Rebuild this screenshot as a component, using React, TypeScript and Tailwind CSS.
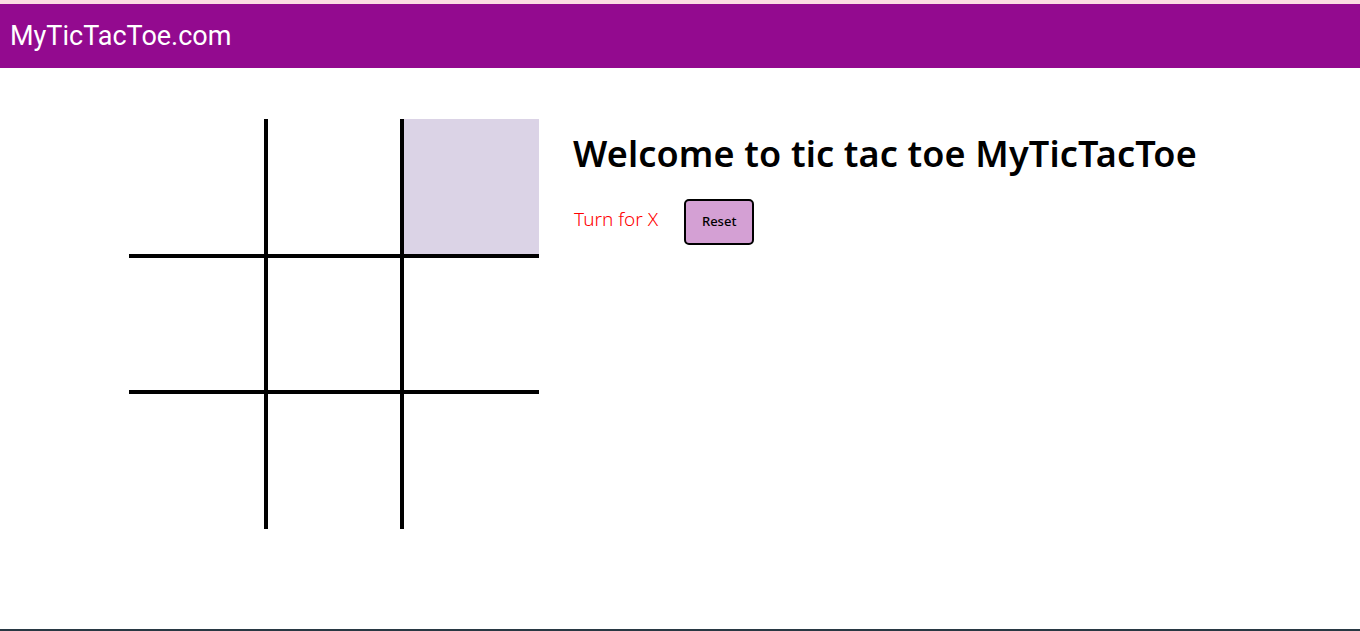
import React from "react";

export default function App() {
  const cells = [0, 1, 2, 3, 4, 5, 6, 7, 8];
  const widths = ["w-[135px]", "w-[132px]", "w-[135px]"];
  const heights = ["h-[135px]", "h-[132px]", "h-[135px]"];
  return (
    <div className="min-h-screen h-[631px] flex flex-col bg-white">
      <div className="h-[4px] bg-[#fcdce3]" />
      <header className="h-[64px] bg-[#930a8f] flex items-center pl-[10px] pt-[1px]">
        <span className="text-white text-[27px] font-['Roboto',sans-serif] leading-none">MyTicTacToe.com</span>
      </header>
      <main className="flex flex-1 pt-[51px] pl-[129px]">
        <div className="grid grid-cols-[135px_132px_135px] grid-rows-[135px_132px_135px] gap-[4px] bg-black w-[410px] h-[410px]">
          {cells.map((i) => (
            <div
              key={i}
              className={`${i === 2 ? "bg-[#dbd3e6]" : "bg-white"} ${widths[i % 3]} ${heights[Math.floor(i / 3)]}`}
            />
          ))}
        </div>
        <div className="ml-[34px] pt-[13px] font-['Noto_Sans',sans-serif]">
          <h1 className="text-[36px] font-semibold text-black leading-[44px] tracking-[0.15px]">
            Welcome to tic tac toe MyTicTacToe
          </h1>
          <div className="flex items-start mt-[23px]">
            <span className="text-[#ff0000] text-[19px] font-light leading-[28px] mt-[6px] ml-[1px]">Turn for X</span>
            <button className="ml-[26px] w-[70px] h-[46px] bg-[#d4a0d4] border-2 border-black rounded-[5px] text-[13px] font-medium text-black">
              Reset
            </button>
          </div>
        </div>
      </main>
      <div className="h-[2px] bg-[#283843]" />
    </div>
  );
}
